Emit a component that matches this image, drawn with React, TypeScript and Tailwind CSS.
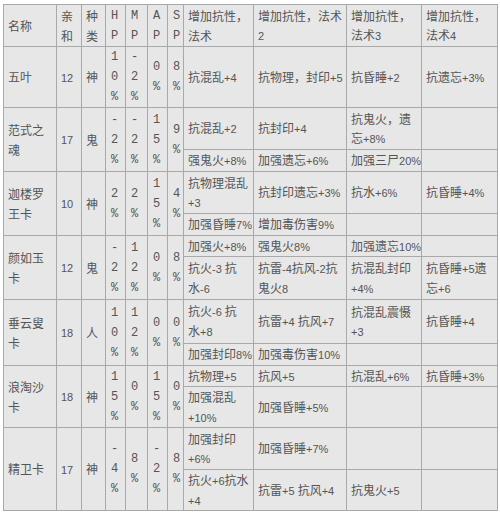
import React from "react";

function Txt({ s }: { s: string }) {
  const parts = s.split(/([\x00-\xff]+)/);
  return (
    <>
      {parts.map((p, i) =>
        p === "" ? null : /[\x00-\xff]/.test(p) ? (
          <span key={i} className="text-[11px] leading-[20px] font-['Liberation_Sans']">
            {p}
          </span>
        ) : (
          <span key={i} className="leading-[20px]">{p}</span>
        )
      )}
    </>
  );
}

const cellBase =
  "border border-[#a9a9a9] bg-[#e7e7e7] align-middle text-left px-[4px] py-0 leading-[20px]";

function Cell({
  lines,
  rowSpan,
  mono,
}: {
  lines: string[];
  rowSpan?: number;
  mono?: boolean;
}) {
  return (
    <td rowSpan={rowSpan} className={cellBase + (mono ? " pl-[5px]" : "")}>
      {lines.map((l, i) => (
        <div key={i} className="whitespace-nowrap h-[20px] flex items-center overflow-visible">
          {mono ? (
            <span className="font-['Liberation_Mono'] text-[12px] leading-[20px]">{l}</span>
          ) : (
            <span className="leading-[20px]">
              <Txt s={l} />
            </span>
          )}
        </div>
      ))}
    </td>
  );
}

type Row = {
  name: string[];
  aff: string;
  kind: string;
  hp: string[];
  mp: string[];
  ap: string[];
  sp: string[];
  heights: number[];
  subs: string[][][];
};

const rows: Row[] = [
  {
    name: ["五叶"],
    aff: "12",
    kind: "神",
    hp: ["1", "0", "%"],
    mp: ["-", "2", "%"],
    ap: ["0", "%"],
    sp: ["8", "%"],
    heights: [61],
    subs: [[["抗混乱+4"], ["抗物理，封印+5"], ["抗昏睡+2"], ["抗遗忘+3%"]]],
  },
  {
    name: ["范式之", "魂"],
    aff: "17",
    kind: "鬼",
    hp: ["-", "2", "%"],
    mp: ["-", "2", "%"],
    ap: ["1", "5", "%"],
    sp: ["9", "%"],
    heights: [42, 22],
    subs: [
      [["抗混乱+2"], ["抗封印+4"], ["抗鬼火，遗", "忘+8%"], []],
      [["强鬼火+8%"], ["加强遗忘+6%"], ["加强三尸20%"], []],
    ],
  },
  {
    name: ["迦楼罗", "王卡"],
    aff: "10",
    kind: "神",
    hp: ["2", "%"],
    mp: ["2", "%"],
    ap: ["1", "5", "%"],
    sp: ["4", "%"],
    heights: [42, 22],
    subs: [
      [["抗物理混乱", "+3"], ["抗封印遗忘+3%"], ["抗水+6%"], ["抗昏睡+4%"]],
      [["加强昏睡7%"], ["增加毒伤害9%"], [], []],
    ],
  },
  {
    name: ["颜如玉", "卡"],
    aff: "12",
    kind: "鬼",
    hp: ["-", "2", "%"],
    mp: ["1", "2", "%"],
    ap: ["0", "%"],
    sp: ["8", "%"],
    heights: [21, 43],
    subs: [
      [["加强火+8%"], ["强鬼火8%"], ["加强遗忘10%"], []],
      [
        ["抗火-3 抗", "水-6"],
        ["抗雷-4抗风-2抗", "鬼火8"],
        ["抗混乱封印", "+4%"],
        ["抗昏睡+5遗", "忘+6"],
      ],
    ],
  },
  {
    name: ["垂云叟", "卡"],
    aff: "18",
    kind: "人",
    hp: ["1", "0", "%"],
    mp: ["1", "2", "%"],
    ap: ["0", "%"],
    sp: ["0", "%"],
    heights: [44, 22],
    subs: [
      [["抗火-6 抗", "水+8"], ["抗雷+4 抗风+7"], ["抗混乱震慑", "+3"], ["抗昏睡+4"]],
      [["加强封印8%"], ["加强毒伤害10%"], [], []],
    ],
  },
  {
    name: ["浪淘沙", "卡"],
    aff: "18",
    kind: "神",
    hp: ["1", "5", "%"],
    mp: ["0", "%"],
    ap: ["1", "5", "%"],
    sp: ["0", "%"],
    heights: [20, 41],
    subs: [
      [["抗物理+5"], ["抗风+5"], ["抗混乱+6%"], ["抗昏睡+3%"]],
      [["加强混乱", "+10%"], ["加强昏睡+5%"], [], []],
    ],
  },
  {
    name: ["精卫卡"],
    aff: "17",
    kind: "神",
    hp: ["-", "4", "%"],
    mp: ["8", "%"],
    ap: ["-", "2", "%"],
    sp: ["8", "%"],
    heights: [42, 41],
    subs: [
      [["加强封印", "+6%"], ["加强昏睡+7%"], [], []],
      [["抗火+6抗水", "+4"], ["抗雷+5 抗风+4"], ["抗鬼火+5"], []],
    ],
  },
];

const heightClass: Record<number, string> = {
  20: "h-[20px]",
  21: "h-[21px]",
  22: "h-[22px]",
  41: "h-[41px]",
  42: "h-[42px]",
  43: "h-[43px]",
  44: "h-[44px]",
  61: "h-[61px]",
};

export default function App() {
  return (
    <div className="w-[500px] h-[513px] bg-white pt-[4px] pl-[3px] text-[#555] text-[12px] font-['Noto_Sans_CJK_SC',sans-serif]">
      <table className="border-collapse table-fixed w-[494px]">
        <colgroup>
          <col className="w-[53px]" />
          <col className="w-[25px]" />
          <col className="w-[24px]" />
          <col className="w-[20px]" />
          <col className="w-[22px]" />
          <col className="w-[20px]" />
          <col className="w-[16px]" />
          <col className="w-[70px]" />
          <col className="w-[93px]" />
          <col className="w-[75px]" />
          <col className="w-[76px]" />
        </colgroup>
        <tbody>
          <tr className="h-[42px]">
            <Cell lines={["名称"]} />
            <Cell lines={["亲", "和"]} />
            <Cell lines={["种", "类"]} />
            <Cell lines={["H", "P"]} mono />
            <Cell lines={["M", "P"]} mono />
            <Cell lines={["A", "P"]} mono />
            <Cell lines={["S", "P"]} mono />
            <Cell lines={["增加抗性，", "法术"]} />
            <Cell lines={["增加抗性，法术", "2"]} />
            <Cell lines={["增加抗性，", "法术3"]} />
            <Cell lines={["增加抗性，", "法术4"]} />
          </tr>
          {rows.map((r, ri) =>
            r.subs.map((sub, si) => (
              <tr key={ri + "-" + si} className={heightClass[r.heights[si]]}>
                {si === 0 && (
                  <>
                    <Cell lines={r.name} rowSpan={r.subs.length} />
                    <Cell lines={[r.aff]} rowSpan={r.subs.length} />
                    <Cell lines={[r.kind]} rowSpan={r.subs.length} />
                    <Cell lines={r.hp} rowSpan={r.subs.length} mono />
                    <Cell lines={r.mp} rowSpan={r.subs.length} mono />
                    <Cell lines={r.ap} rowSpan={r.subs.length} mono />
                    <Cell lines={r.sp} rowSpan={r.subs.length} mono />
                  </>
                )}
                {sub.map((c, ci) => (
                  <Cell key={ci} lines={c} />
                ))}
              </tr>
            ))
          )}
        </tbody>
      </table>
    </div>
  );
}
